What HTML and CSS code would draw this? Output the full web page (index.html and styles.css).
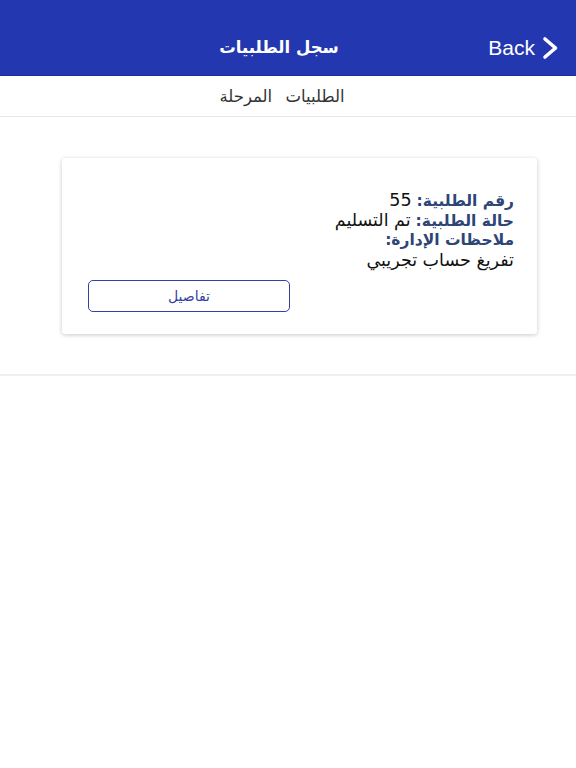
FILE: index.html
```html
<!DOCTYPE html>
<html lang="ar">
<head>
<meta charset="utf-8">
<link rel="stylesheet" href="styles.css">
</head>
<body>
<header class="topbar">
  <div class="topbar-inner">
    <h1 class="title">سجل الطلبيات</h1>
    <a class="back">Back
      <svg class="chev" viewBox="0 0 18 24" width="18" height="24"><path d="M4 3 L14.5 12 L4 21" fill="none" stroke="#fff" stroke-width="3.6" stroke-linecap="round" stroke-linejoin="round"/></svg>
    </a>
  </div>
</header>
<div class="subbar">الطلبيات المرحلة</div>
<main class="content">
  <section class="card" dir="rtl">
    <div class="lines">
      <div class="line"><span class="label">رقم الطلبية:</span> <span class="val">55</span></div>
      <div class="line"><span class="label">حالة الطلبية:</span> <span class="val">تم التسليم</span></div>
      <div class="line"><span class="label">ملاحظات الإدارة:</span></div>
      <div class="line"><span class="val">تفريغ حساب تجريبي</span></div>
    </div>
    <div class="actions">
      <button class="btn">تفاصيل</button>
    </div>
  </section>
</main>
<hr class="sep">
</body>
</html>
```
FILE: styles.css
```css
* { box-sizing: border-box; }
html, body { margin: 0; padding: 0; background: #fff; }
body { font-family: "DejaVu Sans", "Noto Sans", sans-serif; color: #111; width: 576px; }
.topbar { background: #2337b0; height: 76px; padding-top: 20px; border-bottom: 1px solid #1d2f9a; }
.topbar-inner { position: relative; height: 55px; display: flex; align-items: center; justify-content: center; }
.title { margin: 0 18px 0 0; font-size: 16.5px; font-weight: bold; color: #fff; }
.back { position: absolute; right: 17px; top: 0; height: 55px; display: flex; align-items: center; gap: 6px; color: #fff; font-family: "Liberation Sans", Arial, sans-serif; font-size: 21px; text-decoration: none; }
.chev { display: block; }
.subbar { height: 41px; display: flex; align-items: center; justify-content: center; font-size: 16.5px; word-spacing: 8px; color: #333; border-bottom: 1px solid #e6e6e6; padding-right: 12px; }
.content { padding: 41px 39px 40px 62px; }
.card { background: #fff; border-radius: 3px; box-shadow: 0 1px 4px rgba(0,0,0,0.22); padding: 32px 23px 22px 26px; }
.lines { font-size: 15.5px; }
.line { height: 20px; line-height: 20px; overflow: visible; white-space: nowrap; }
.label { color: #2d4577; font-weight: bold; }
.val { color: #111; font-size: 17.5px; line-height: 20px; }
.actions { display: flex; justify-content: flex-end; margin-top: 10px; }
.btn { width: 202px; height: 32px; border: 1.5px solid #3442a0; border-radius: 5px; background: #fff; color: #3442a0; font-family: "DejaVu Sans", sans-serif; font-size: 14px; }
.sep { margin: 0; border: 0; height: 2px; background: #efefef; }
```
